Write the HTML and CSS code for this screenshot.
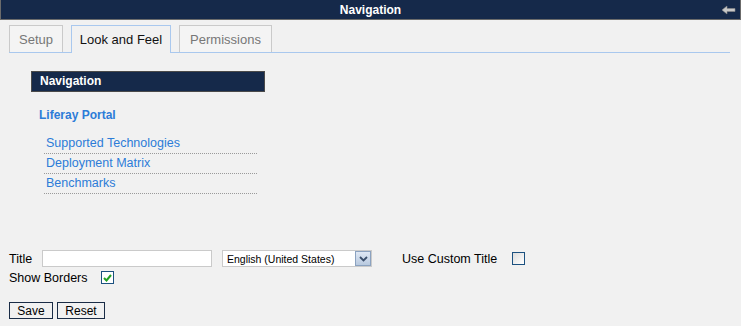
FILE: index.html
```html
<!DOCTYPE html>
<html lang="en">

<head>
    <meta charset="UTF-8">
    <title>Navigation</title>
    <link rel="stylesheet" href="styles.css">
</head>

<body>
    <div class="portlet">
        <div class="portlet-title">
            <span>Navigation</span>
            <svg class="back-icon" width="14" height="10" viewBox="0 0 14 10">
                <path d="M0 5 L5 1 L5 3.5 L13 3.5 L13 6.5 L5 6.5 L5 9 Z" fill="#c8c8c8" stroke="#8a8a8a" stroke-width="0.6"/>
            </svg>
        </div>

        <ul class="tabs">
            <li class="tab tab-setup">Setup</li>
            <li class="tab tab-look current">Look and Feel</li>
            <li class="tab tab-perm">Permissions</li>
        </ul>

        <div class="preview">
            <div class="preview-title">Navigation</div>
            <div class="nav-root">Liferay Portal</div>
            <ul class="nav-links">
                <li><a href="#">Supported Technologies</a></li>
                <li><a href="#">Deployment Matrix</a></li>
                <li><a href="#">Benchmarks</a></li>
            </ul>
        </div>

        <form class="settings">
            <div class="row">
                <label class="title-label">Title</label>
                <input type="text" class="title-input">
                <div class="lang-select">
                    <span>English (United States)</span>
                    <span class="select-btn">
                        <svg width="9" height="6" viewBox="0 0 9 6">
                            <path d="M1 1 L4.5 4.5 L8 1" fill="none" stroke="#3b4f6b" stroke-width="1.8"/>
                        </svg>
                    </span>
                </div>
                <label class="custom-label">Use Custom Title</label>
                <span class="check"></span>
            </div>
            <div class="row">
                <label class="borders-label">Show Borders</label>
                <span class="check checked">
                    <svg width="9" height="8" viewBox="0 0 9 8">
                        <path d="M1 4 L3.5 6.5 L8 1" fill="none" stroke="#22a022" stroke-width="2"/>
                    </svg>
                </span>
            </div>
            <div class="buttons">
                <button type="button" class="btn save">Save</button>
                <button type="button" class="btn reset">Reset</button>
            </div>
        </form>
    </div>
</body>

</html>
```

FILE: styles.css
```css
body {
    margin: 0;
    background-color: #F1F1F1;
    font-family: "Liberation Sans", Arial, sans-serif;
    font-size: 12px;
    color: #000;
}

.portlet {
    width: 741px;
    height: 326px;
}

.portlet-title {
    height: 19px;
    background-color: #15294A;
    border: 1px solid #6b6b6b;
    border-top: none;
    color: #fff;
    font-weight: bold;
    display: flex;
    align-items: center;
    justify-content: center;
    position: relative;
}

.back-icon {
    position: absolute;
    right: 4px;
    top: 5px;
}

.tabs {
    list-style: none;
    margin: 5px 11px 0 9px;
    padding: 0;
    display: flex;
    gap: 8px;
    border-bottom: 1px solid #A9C8EE;
    height: 27px;
}

.tab {
    box-sizing: border-box;
    height: 27px;
    border: 1px solid #CACACA;
    border-bottom: none;
    background-color: #F4F4F4;
    color: #777;
    font-size: 13px;
    display: flex;
    align-items: center;
    justify-content: center;
}

.tab-setup { width: 54px; }
.tab-look { width: 100px; }
.tab-perm { width: 93px; }

.tab.current {
    height: 28px;
    background-color: #F1F1F1;
    border-color: #A9C8EE;
    color: #111;
}

.preview {
    padding: 18px 0 0 31px;
    height: 178px;
}

.preview-title {
    box-sizing: border-box;
    width: 234px;
    height: 21px;
    background-color: #15294A;
    border: 1px solid #4a4a4a;
    color: #fff;
    font-weight: bold;
    padding-left: 8px;
    line-height: 19px;
}

.nav-root {
    color: #2C7CD8;
    font-weight: bold;
    margin: 16px 0 0 8px;
    line-height: 15px;
}

.nav-links {
    list-style: none;
    margin: 11px 0 0 13px;
    padding: 0;
    width: 213px;
    font-size: 12.5px;
}

.nav-links li {
    border-bottom: 1px dotted #9a9a9a;
    padding-left: 2px;
    height: 19px;
    line-height: 19px;
}

.nav-links a {
    color: #2C7CD8;
    text-decoration: none;
}

.settings {
    padding-left: 9px;
    font-size: 12.5px;
}

.row {
    display: flex;
    align-items: center;
    height: 19px;
}

.title-label {
    width: 33px;
}

.title-input {
    box-sizing: border-box;
    width: 170px;
    height: 17px;
    border: 1px solid #CACACA;
    background-color: #fff;
    margin: 0;
}

.lang-select {
    box-sizing: border-box;
    width: 150px;
    height: 17px;
    margin-left: 10px;
    border: 1px solid #CACACA;
    background-color: #fff;
    display: flex;
    align-items: center;
    justify-content: space-between;
    padding-left: 4px;
    font-size: 10.5px;
}

.select-btn {
    box-sizing: border-box;
    width: 16px;
    height: 15px;
    background: linear-gradient(#dfe8f4, #b8c9df);
    border: 1px solid #8ba2c0;
    display: flex;
    align-items: center;
    justify-content: center;
}

.custom-label {
    margin-left: 30px;
    width: 110px;
}

.check {
    box-sizing: border-box;
    width: 13px;
    height: 13px;
    border: 1px solid #1c5180;
    background: linear-gradient(135deg, #dcdcdc, #ffffff);
    display: flex;
    align-items: center;
    justify-content: center;
}

.borders-label {
    width: 92px;
}

.check.checked {
    background: #fff;
}

.buttons {
    display: flex;
    gap: 4px;
    margin-top: 15px;
}

.btn {
    box-sizing: border-box;
    height: 17px;
    padding: 0;
    border: 1px solid #1a2c46;
    background-color: #F1F1F1;
    font-family: "Liberation Sans", Arial, sans-serif;
    font-size: 12px;
    color: #000;
}

.btn.save {
    width: 44px;
}

.btn.reset {
    width: 48px;
}
```
